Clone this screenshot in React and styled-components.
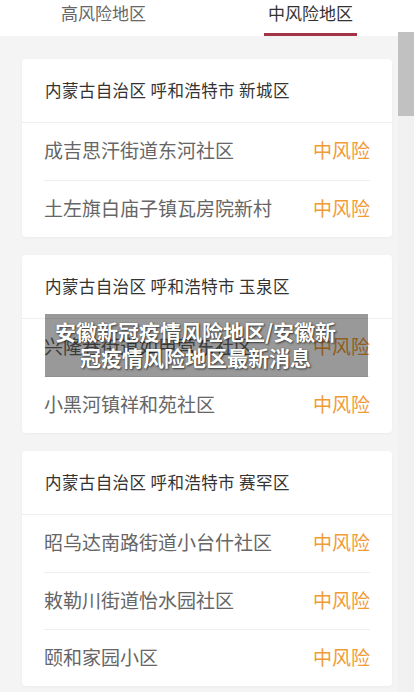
import React from 'react';
import styled, { createGlobalStyle } from 'styled-components';

const GlobalStyle = createGlobalStyle`
  html, body {
    margin: 0;
    padding: 0;
    background: #f4f4f4;
  }
  body {
    font-family: "Noto Sans CJK SC", "Noto Sans", sans-serif;
  }
`;

const Page = styled.div`
  position: relative;
  width: 414px;
  height: 692px;
  overflow: hidden;
  background: #f4f4f4;
`;

const TabBar = styled.div`
  display: flex;
  height: 36px;
  background: #fff;
`;

const Tab = styled.div`
  flex: 1;
  display: flex;
  flex-direction: column;
  align-items: center;
  justify-content: space-between;
`;

const TabLabel = styled.span`
  font-size: 17px;
  line-height: 25px;
  color: ${({ active }) => (active ? '#333' : '#666')};
`;

const Indicator = styled.span`
  width: 93px;
  height: 3px;
  background: ${({ active }) => (active ? '#a33446' : 'transparent')};
`;

const List = styled.div`
  display: flex;
  flex-direction: column;
  gap: 18px;
  padding: 23px 22px 0;
`;

const Card = styled.section`
  background: #fff;
  border-radius: 4px;
  box-shadow: 0 1px 3px rgba(0, 0, 0, 0.04);
`;

const CardHeader = styled.div`
  display: flex;
  align-items: center;
  height: 64px;
  box-sizing: border-box;
  padding: 0 23px 1px;
  border-bottom: 1px solid #eee;
  font-size: 16.5px;
  letter-spacing: 0.4px;
  color: #333;
  white-space: pre;
`;

const Row = styled.div`
  display: flex;
  align-items: center;
  justify-content: space-between;
  height: 57px;
  box-sizing: border-box;
  padding-bottom: 4px;
  margin: 0 22px;
  & + & {
    border-top: 1px solid #eee;
  }
`;

const Place = styled.span`
  font-size: 19px;
  color: #666;
`;

const Risk = styled.span`
  font-size: 19px;
  color: #f19b35;
`;

const Watermark = styled.div`
  position: absolute;
  left: 45px;
  top: 314px;
  width: 323px;
  box-sizing: border-box;
  padding: 4px 30px 7px 8px;
  background: rgba(0, 0, 0, 0.4);
  color: #fff;
  font-size: 21px;
  font-weight: 700;
  line-height: 26px;
  text-align: center;
  text-shadow: 1px 1px 2px rgba(0, 0, 0, 0.6), 0 0 1px rgba(0, 0, 0, 0.5);
`;

const Scrollbar = styled.div`
  position: absolute;
  right: 0;
  top: 32px;
  bottom: 0;
  width: 16px;
  background: #f1f1f1;
`;

const Thumb = styled.div`
  height: 84px;
  background: #c1c1c1;
`;

const groups = [
  {
    area: '内蒙古自治区 呼和浩特市 新城区',
    places: ['成吉思汗街道东河社区', '土左旗白庙子镇瓦房院新村'],
  },
  {
    area: '内蒙古自治区 呼和浩特市 玉泉区',
    places: ['兴隆巷街道如甲营东社区', '小黑河镇祥和苑社区'],
  },
  {
    area: '内蒙古自治区 呼和浩特市 赛罕区',
    places: ['昭乌达南路街道小台什社区', '敕勒川街道怡水园社区', '颐和家园小区'],
  },
];

const tabs = [
  { id: 'high', name: '高风险地区' },
  { id: 'mid', name: '中风险地区', active: true },
];

export default function App() {
  return (
    <Page>
      <GlobalStyle />
      <TabBar>
        {tabs.map(({ id, name, active }) => (
          <Tab key={id}>
            <TabLabel active={active}>{name}</TabLabel>
            <Indicator active={active} />
          </Tab>
        ))}
      </TabBar>
      <List>
        {groups.map(({ area, places }) => (
          <Card key={area}>
            <CardHeader>{area}</CardHeader>
            {places.map((place) => (
              <Row key={place}>
                <Place>{place}</Place>
                <Risk>中风险</Risk>
              </Row>
            ))}
          </Card>
        ))}
      </List>
      <Watermark>安徽新冠疫情风险地区/安徽新冠疫情风险地区最新消息</Watermark>
      <Scrollbar>
        <Thumb />
      </Scrollbar>
    </Page>
  );
}
